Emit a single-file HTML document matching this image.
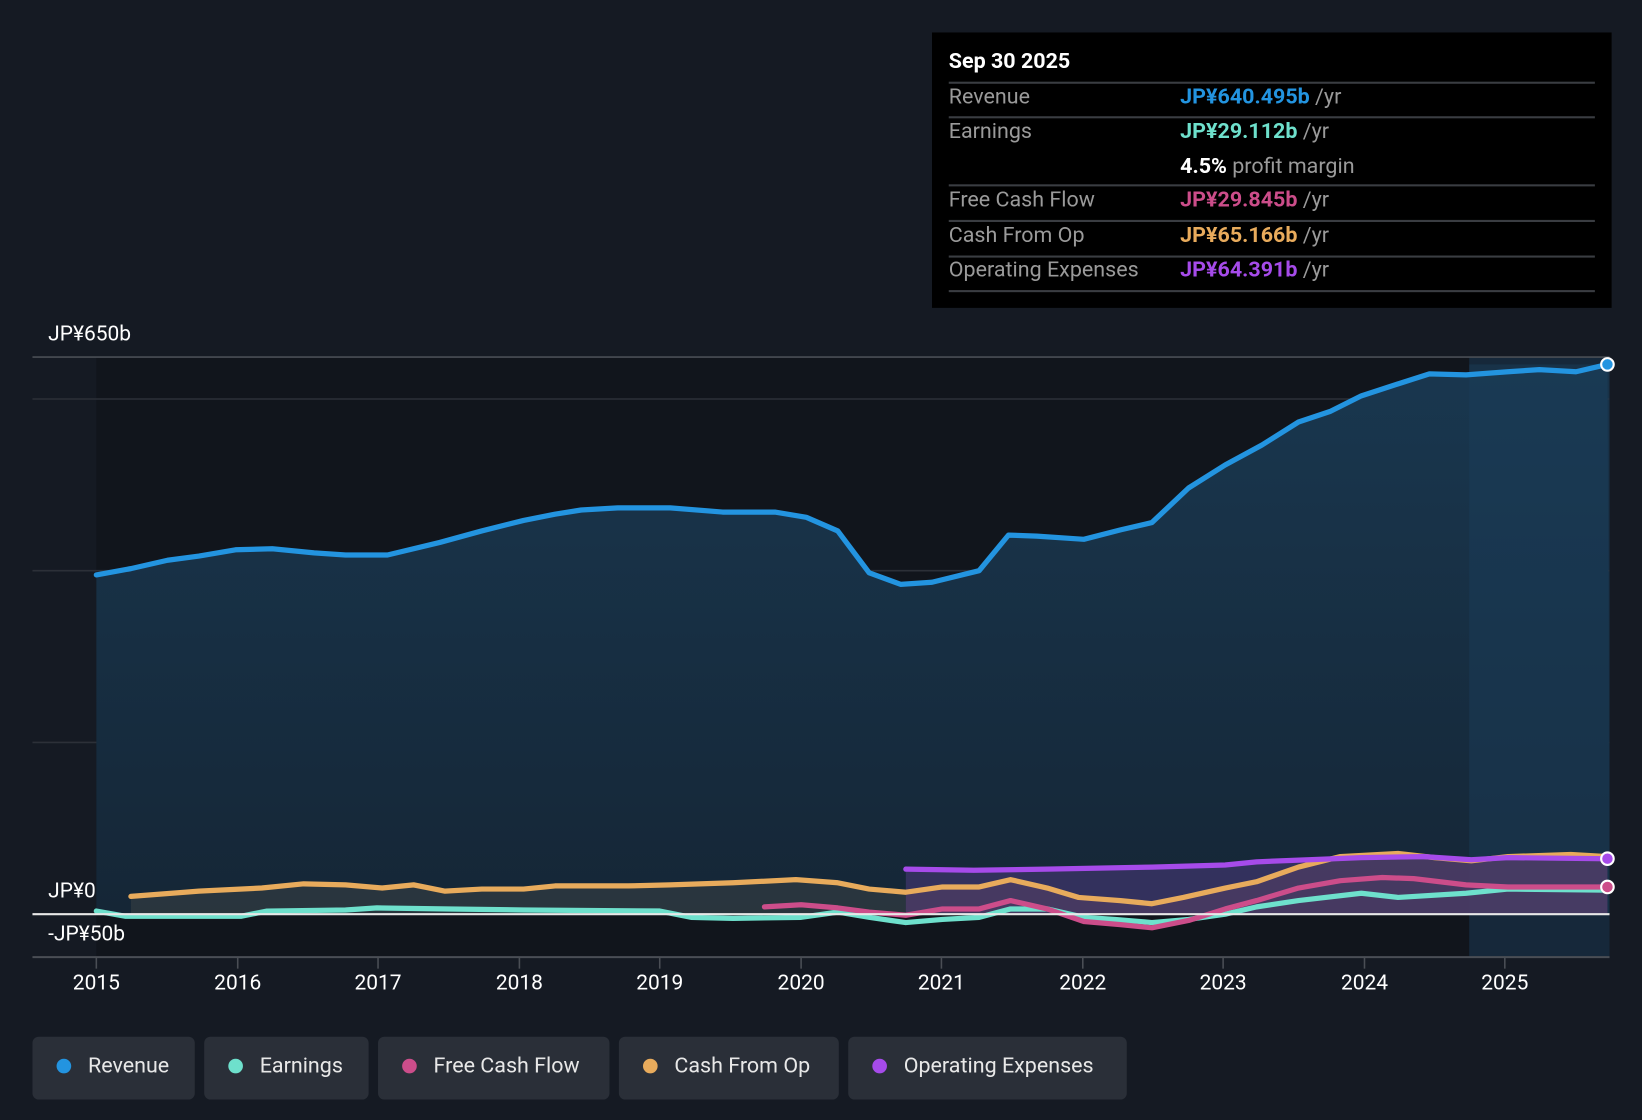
<!DOCTYPE html>
<html><head><meta charset="utf-8"><style>
html,body{margin:0;padding:0;background:#151a23;width:1642px;height:1120px;overflow:hidden}
#w{width:1568px;height:1070px;transform:scale(1.04719);transform-origin:0 0;position:relative;font-family:"Roboto","Liberation Sans",sans-serif}
.t{position:absolute;left:890px;top:31px;width:649px;height:263px;background:#000}
.r{position:absolute;left:16px;width:617px;font-size:20.5px;color:#9a9a9a}
.r b{font-weight:normal;position:absolute;left:221px}
.ln{position:absolute;left:16px;width:617px;height:2px;background:#3a3d42}
.lg{position:absolute;top:990px;height:60px;background:#2a2f38;border-radius:6px;color:#e8e8e8;font-size:20.5px;line-height:56px}
.lg i{position:absolute;left:23px;top:21px;width:14px;height:14px;border-radius:50%}
.lg span{position:absolute;left:53px}
.ax{position:absolute;color:#fff;font-size:20px}
</style></head><body><div id="w">
<svg width="1568" height="1070" style="position:absolute;left:0;top:0">
<defs>
<linearGradient id="rg" x1="0" y1="0" x2="0" y2="1"><stop offset="0" stop-color="#19374f"/><stop offset="1" stop-color="#152636"/></linearGradient>
</defs>
<rect x="92" y="341" width="1311" height="573" fill="#11151c"/>
<rect x="1403" y="341" width="134" height="573" fill="#16283a"/>
<line x1="31" y1="341" x2="1537" y2="341" stroke="#4a4e55" stroke-width="1.5"/>
<line x1="31" y1="381" x2="1537" y2="381" stroke="#2c3038" stroke-width="1.5"/>
<line x1="31" y1="545" x2="1537" y2="545" stroke="#2c3038" stroke-width="1.5"/>
<line x1="31" y1="709" x2="1537" y2="709" stroke="#2c3038" stroke-width="1.5"/>
<path d="M92,549 L125,543 160,535 190,531 225,525 260,524 300,528 330,530 370,530 420,518 460,507 500,497 530,491 555,487 590,485 640,485 690,489 740,489 770,494 800,507 830,547 860,558 890,556 935,545 963,511 990,512 1035,515 1070,506 1100,499 1135,466 1170,444 1205,425 1240,403 1270,393 1300,378 1340,365 1365,357 1400,358 1440,355 1470,353 1505,355 1535,348 L1537,873 L92,873Z" fill="url(#rg)"/>
<rect x="1403" y="348" width="134" height="525" fill="#1b3e5a" opacity="0.45"/>
<path d="M125,856 190,851 250,848 290,844 330,845 365,848 395,845 425,851 460,849 500,849 530,846 600,846 640,845 700,843 760,840 800,843 830,849 865,852 L865,873 125,873Z" fill="#2e3a40" opacity="0.8"/>
<path d="M865,830 930,831 1000,830 1100,828 1170,826 1200,823 1250,821 1300,819 1360,818 1405,821 1440,819 1535,820 L1535,873 865,873Z" fill="#3b3566" opacity="0.8"/>
<path d="M865,852 900,847 935,847 965,840 1000,848 1030,857 1070,860 1100,863 1130,857 1170,848 1200,842 1240,828 1280,818 1335,815 1370,819 1405,822 1440,818 1500,816 1535,818 L1535,873 865,873Z" fill="#6a4a6a" opacity="0.35"/>
<g fill="none" stroke-width="5" stroke-linejoin="round" stroke-linecap="round">
<path d="M125,856 190,851 250,848 290,844 330,845 365,848 395,845 425,851 460,849 500,849 530,846 600,846 640,845 700,843 760,840 800,843 830,849 865,852 900,847 935,847 965,840 1000,848 1030,857 1070,860 1100,863 1130,857 1170,848 1200,842 1240,828 1280,818 1335,815 1370,819 1405,822 1440,818 1500,816 1535,818" stroke="#e8ab5c"/>
<path d="M92,870 120,875 230,875 255,870 330,869 360,867 430,868 500,869 630,870 660,876 700,877 765,876 800,871 830,876 865,881 900,878 935,876 965,868 1000,868 1035,876 1065,878 1100,881 1135,878 1170,873 1200,866 1240,860 1300,853 1335,857 1400,853 1440,849 1535,850" stroke="#6ee0cc"/>
<path d="M730,866 765,864 800,867 830,871 865,874 900,868 935,868 965,860 1000,868 1035,880 1070,883 1100,886 1135,879 1170,868 1200,860 1240,848 1280,841 1320,838 1350,839 1400,845 1440,847 1535,847" stroke="#cc4d8a"/>
<path d="M865,830 930,831 1000,830 1100,828 1170,826 1200,823 1250,821 1300,819 1360,818 1405,821 1440,819 1535,820" stroke="#a64bea"/>
<path d="M92,549 L125,543 160,535 190,531 225,525 260,524 300,528 330,530 370,530 420,518 460,507 500,497 530,491 555,487 590,485 640,485 690,489 740,489 770,494 800,507 830,547 860,558 890,556 935,545 963,511 990,512 1035,515 1070,506 1100,499 1135,466 1170,444 1205,425 1240,403 1270,393 1300,378 1340,365 1365,357 1400,358 1440,355 1470,353 1505,355 1535,348" stroke="#2394e0"/>
</g>
<line x1="31" y1="873" x2="1537" y2="873" stroke="#e8e8e8" stroke-width="2"/>
<line x1="31" y1="914" x2="1537" y2="914" stroke="#4a4e55" stroke-width="2"/>
<g stroke="#4a4e55" stroke-width="1.5">
<line x1="92" y1="914" x2="92" y2="925"/><line x1="227" y1="914" x2="227" y2="925"/><line x1="361" y1="914" x2="361" y2="925"/><line x1="496" y1="914" x2="496" y2="925"/><line x1="630" y1="914" x2="630" y2="925"/><line x1="765" y1="914" x2="765" y2="925"/><line x1="899" y1="914" x2="899" y2="925"/><line x1="1034" y1="914" x2="1034" y2="925"/><line x1="1168" y1="914" x2="1168" y2="925"/><line x1="1303" y1="914" x2="1303" y2="925"/><line x1="1437" y1="914" x2="1437" y2="925"/>
</g>
<g stroke="#fff" stroke-width="2">
<circle cx="1535" cy="348" r="6" fill="#2394e0"/>
<circle cx="1535" cy="820" r="6" fill="#a64bea"/>
<circle cx="1535" cy="847" r="6" fill="#cc4d8a"/>
</g>
<g fill="#fff" font-size="20" font-family="Roboto,Liberation Sans,sans-serif" text-anchor="middle">
<text x="92" y="945">2015</text><text x="227" y="945">2016</text><text x="361" y="945">2017</text><text x="496" y="945">2018</text><text x="630" y="945">2019</text><text x="765" y="945">2020</text><text x="899" y="945">2021</text><text x="1034" y="945">2022</text><text x="1168" y="945">2023</text><text x="1303" y="945">2024</text><text x="1437" y="945">2025</text>
</g>
</svg>
<div class="ax" style="left:46px;top:306px">JP¥650b</div>
<div class="ax" style="left:46px;top:838px">JP¥0</div>
<div class="ax" style="left:46px;top:879px">-JP¥50b</div>
<div class="t">
<div class="r" style="top:16px;color:#fff;font-weight:bold">Sep 30 2025</div>
<div class="ln" style="top:47px"></div>
<div class="r" style="top:50px">Revenue<b><span style="color:#2394e0;font-weight:bold;position:static">JP¥640.495b</span> /yr</b></div>
<div class="ln" style="top:80px"></div>
<div class="r" style="top:83px">Earnings<b><span style="color:#6ee0cc;font-weight:bold;position:static">JP¥29.112b</span> /yr</b></div>
<div class="r" style="top:116px"><b><span style="color:#fff;font-weight:bold;position:static">4.5%</span> profit margin</b></div>
<div class="ln" style="top:145px"></div>
<div class="r" style="top:148px">Free Cash Flow<b><span style="color:#cc4d8a;font-weight:bold;position:static">JP¥29.845b</span> /yr</b></div>
<div class="ln" style="top:179px"></div>
<div class="r" style="top:182px">Cash From Op<b><span style="color:#e8ab5c;font-weight:bold;position:static">JP¥65.166b</span> /yr</b></div>
<div class="ln" style="top:213px"></div>
<div class="r" style="top:215px">Operating Expenses<b><span style="color:#a64bea;font-weight:bold;position:static">JP¥64.391b</span> /yr</b></div>
<div class="ln" style="top:246px"></div>
</div>
<div class="lg" style="left:31px;width:155px"><i style="background:#2394e0"></i><span>Revenue</span></div>
<div class="lg" style="left:195px;width:157px"><i style="background:#6ee0cc"></i><span>Earnings</span></div>
<div class="lg" style="left:361px;width:221px"><i style="background:#cc4d8a"></i><span>Free Cash Flow</span></div>
<div class="lg" style="left:591px;width:210px"><i style="background:#e8ab5c"></i><span>Cash From Op</span></div>
<div class="lg" style="left:810px;width:266px"><i style="background:#a64bea"></i><span>Operating Expenses</span></div>
</div></body></html>
